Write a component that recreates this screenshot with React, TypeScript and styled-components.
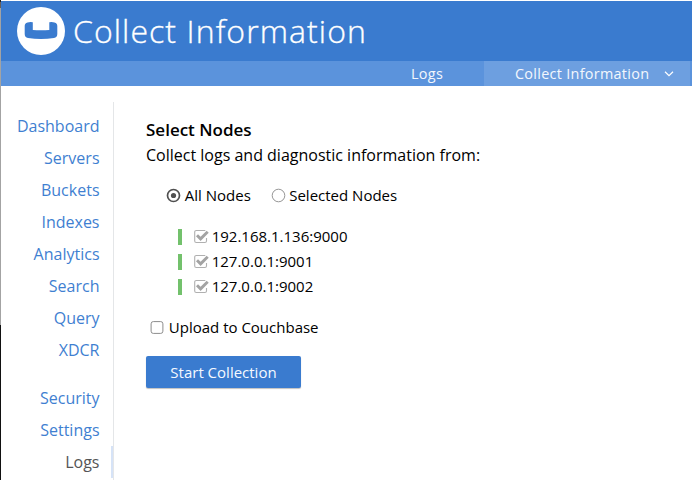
import React from "react";
import styled, { createGlobalStyle } from "styled-components";

const GlobalStyle = createGlobalStyle`
  * { box-sizing: border-box; }
  html, body { margin: 0; padding: 0; background: #fff; overflow: hidden; }
  body { font-family: "Open Sans", "Noto Sans", sans-serif; color: #000; }
`;

const Frame = styled.div`
  width: 692px;
  height: 480px;
  display: grid;
  grid-template-columns: 1px 691px;
  overflow: hidden;
`;

const WindowEdge = styled.div`
  background: linear-gradient(#222 0 2px, #655f5c 2px 8px, #a3a3a3 8px 325px, #111 325px);
`;

const Page = styled.div`
  display: flex;
  flex-direction: column;
  padding-top: 1px;
`;

const Header = styled.header`
  height: 60px;
  flex: none;
  display: flex;
  align-items: center;
  padding-left: 16px;
  background: #3a7bcf;
`;

const Logo = styled.svg`
  width: 48px;
  height: 48px;
  flex: none;
`;

const Title = styled.h1`
  margin: 0 0 0 8px;
  font-size: 32px;
  line-height: 44px;
  font-weight: 300;
  letter-spacing: 1.08px;
  -webkit-text-stroke: 0.35px #fff;
  color: #fff;
  white-space: nowrap;
`;

const SubNav = styled.nav`
  height: 25px;
  flex: none;
  display: flex;
  justify-content: flex-end;
  padding-right: 2px;
  background: #5b93dc;
`;

const Tab = styled.a<{ $active?: boolean; $width: number; $left: number }>`
  width: ${(p) => p.$width}px;
  padding-left: ${(p) => p.$left}px;
  display: flex;
  align-items: center;
  gap: 14.6px;
  font-size: 14.4px;
  line-height: 25px;
  letter-spacing: 0.3px;
  white-space: nowrap;
  color: #f3f7fd;
  background: ${(p) => (p.$active ? "#6d9fe0" : "transparent")};
`;

const Chevron = styled.svg`
  width: 10px;
  height: 6px;
`;

const Body = styled.div`
  flex: 1;
  display: flex;
  padding-top: 16px;
`;

const Sidebar = styled.nav`
  width: 113px;
  flex: none;
  padding-top: 8px;
  border-right: 1px solid #e4e6e8;
`;

const SideLink = styled.a<{ $active?: boolean; $gap?: boolean }>`
  display: block;
  height: 32px;
  margin-top: ${(p) => (p.$gap ? 16 : 0)}px;
  padding-right: ${(p) => (p.$active ? 11.5 : 13.5)}px;
  border-right: ${(p) => (p.$active ? "2px solid #d6e3f7" : "none")};
  text-align: right;
  font-size: 16px;
  line-height: 32px;
  color: ${(p) => (p.$active ? "#555" : "#3f7fd1")};
`;

const Main = styled.main`
  padding: 16px 0 0 32px;
`;

const Heading = styled.h2`
  margin: 0 0 2px;
  font-size: 17px;
  line-height: 23px;
  font-weight: 600;
`;

const Intro = styled.p`
  margin: 0;
  font-size: 16px;
  line-height: 24px;
`;

const Options = styled.div`
  display: flex;
  gap: 20px;
  margin: 16px 0 0 20px;
`;

const Choice = styled.label<{ $gap?: number }>`
  display: flex;
  align-items: center;
  gap: ${(p) => p.$gap ?? 3.8}px;
  height: 25px;
  font-size: 15px;
  line-height: 25px;
  white-space: nowrap;
`;

const Mark = styled.svg`
  width: 15px;
  height: 15px;
  flex: none;
`;

const NodeList = styled.div`
  margin: 16px 0 0 32px;
`;

const NodeRow = styled.div`
  display: flex;
  align-items: center;
  gap: 12px;
  height: 25px;
`;

const Health = styled.span`
  width: 4px;
  height: 16px;
  background: #73c16c;
`;

const UploadRow = styled.div`
  display: flex;
  margin: 16px 0 0 4px;
`;

const Button = styled.button`
  display: block;
  width: 155px;
  height: 32px;
  margin-top: 16px;
  padding: 0;
  border: 0;
  border-radius: 2px;
  background: #3a7bcf;
  box-shadow: 0 1px 1px rgba(0, 0, 0, 0.25);
  color: #f5f9ff;
  font-family: inherit;
  font-size: 15px;
  line-height: 32px;
`;

const Radio = ({ checked }: { checked?: boolean }) => (
  <Mark viewBox="0 0 15 15">
    <circle cx="7.500" cy="7.500" r={checked ? 6 : 6.3} fill="#fff" stroke={checked ? "#505050" : "#969696"} strokeWidth={checked ? 1.7 : 1} />
    {checked && <circle cx="7.500" cy="7.500" r="2.600" fill="#505050" />}
  </Mark>
);

const Tick = () => (
  <Mark viewBox="0 0 15 15">
    <path d="M11.300 1.500H2.300A1.600 1.600 0 0 0 .7 3.100V11.900A1.600 1.600 0 0 0 2.300 13.500H10.900A1.600 1.600 0 0 0 12.500 11.900V9" fill="none" stroke="#b0b0b0" strokeWidth="1.100" />
    <path d="M3 6.300L6.600 9.900L13.700 2.800" fill="none" stroke="#a3a3a3" strokeWidth="2.900" />
  </Mark>
);

const Box = () => (
  <Mark viewBox="0 0 15 15">
    <rect x="1.100" y="1.600" width="11.800" height="11.800" rx="2.200" fill="#fff" stroke="#8c8c8c" />
  </Mark>
);

const links = ["Dashboard", "Servers", "Buckets", "Indexes", "Analytics", "Search", "Query", "XDCR", "Security", "Settings", "Logs"];
const nodes = ["192.168.1.136:9000", "127.0.0.1:9001", "127.0.0.1:9002"];

export default function App() {
  return (
    <Frame>
      <GlobalStyle />
      <WindowEdge />
      <Page>
        <Header>
          <Logo viewBox="0 0 48 48">
            <circle cx="24" cy="24" r="24" fill="#fff" />
            <path d="M10.500 15.400Q13 14.700 15.800 15.200V22.900Q24 23.600 32.300 22.900V15.200Q35 14.700 37.500 15.400Q40.300 16.200 40.300 19V27Q40.300 30.300 37 31.100Q24 32.900 11 31.100Q7.700 30.300 7.700 27V19Q7.700 16.200 10.500 15.400Z" fill="#3a7bcf" />
          </Logo>
          <Title>Collect Information</Title>
        </Header>
        <SubNav>
          <Tab $width={105} $left={32}>Logs</Tab>
          <Tab $active $width={206} $left={31}>
            Collect Information
            <Chevron viewBox="0 0 10 6">
              <path d="M1 .8L5 4.600L9 .8" fill="none" stroke="#fff" strokeWidth="1.200" />
            </Chevron>
          </Tab>
        </SubNav>
        <Body>
          <Sidebar>
            {links.map((name) => (
              <SideLink key={name} $active={name === "Logs"} $gap={name === "Security"}>{name}</SideLink>
            ))}
          </Sidebar>
          <Main>
            <Heading>Select Nodes</Heading>
            <Intro>Collect logs and diagnostic information from:</Intro>
            <Options>
              <Choice><Radio checked />All Nodes</Choice>
              <Choice $gap={3.4}><Radio />Selected Nodes</Choice>
            </Options>
            <NodeList>
              {nodes.map((address) => (
                <NodeRow key={address}>
                  <Health />
                  <Choice $gap={2.7}><Tick />{address}</Choice>
                </NodeRow>
              ))}
            </NodeList>
            <UploadRow>
              <Choice><Box />Upload to Couchbase</Choice>
            </UploadRow>
            <Button>Start Collection</Button>
          </Main>
        </Body>
      </Page>
    </Frame>
  );
}
